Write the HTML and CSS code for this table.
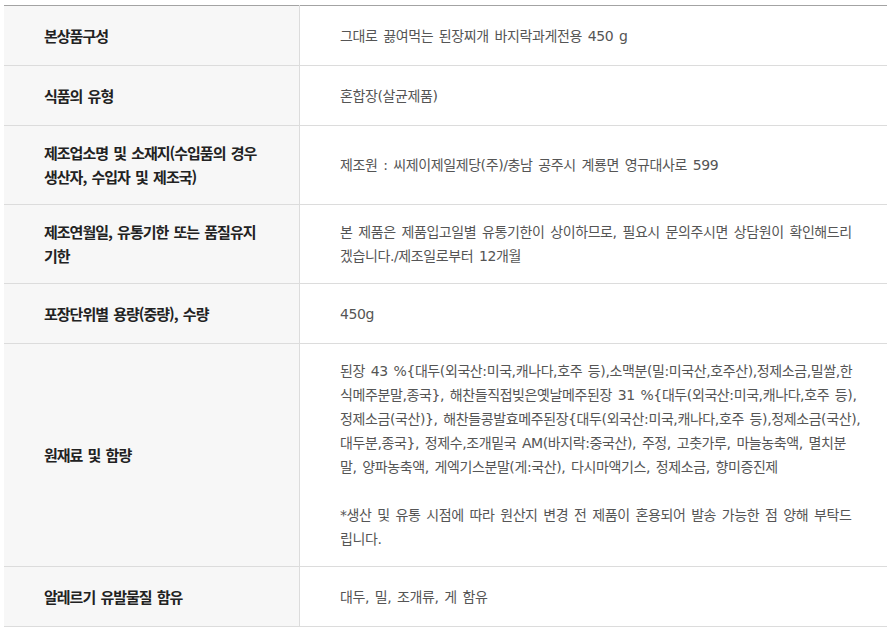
FILE: index.html
```html
<!DOCTYPE html>
<html lang="ko">
<head>
<meta charset="utf-8">
<link rel="stylesheet" href="styles.css">
</head>
<body>
<div class="wrap">
<table class="info">
  <tbody>
    <tr>
      <th>본상품구성</th>
      <td>그대로 끓여먹는 된장찌개 바지락과게전용 450 g</td>
    </tr>
    <tr>
      <th>식품의 유형</th>
      <td>혼합장(살균제품)</td>
    </tr>
    <tr>
      <th>제조업소명 및 소재지(수입품의 경우 생산자, 수입자 및 제조국)</th>
      <td>제조원 : 씨제이제일제당(주)/충남 공주시 계룡면 영규대사로 599</td>
    </tr>
    <tr>
      <th>제조연월일, 유통기한 또는 품질유지 기한</th>
      <td>본 제품은 제품입고일별 유통기한이 상이하므로, 필요시 문의주시면 상담원이 확인해드리겠습니다./제조일로부터 12개월</td>
    </tr>
    <tr>
      <th>포장단위별 용량(중량), 수량</th>
      <td>450g</td>
    </tr>
    <tr>
      <th>원재료 및 함량</th>
      <td>된장 43 %{대두(외국산:미국,캐나다,호주 등),소맥분(밀:미국산,호주산),정제소금,밀쌀,한식메주분말,종국}, 해찬들직접빚은옛날메주된장 31 %{대두(외국산:미국,캐나다,호주 등),정제소금(국산)}, 해찬들콩발효메주된장{대두(외국산:미국,캐나다,호주 등),정제소금(국산),대두분,종국}, 정제수,조개밑국 AM(바지락:중국산), 주정, 고춧가루, 마늘농축액, 멸치분말, 양파농축액, 게엑기스분말(게:국산), 다시마액기스, 정제소금, 향미증진제<br><br>*생산 및 유통 시점에 따라 원산지 변경 전 제품이 혼용되어 발송 가능한 점 양해 부탁드립니다.</td>
    </tr>
    <tr>
      <th>알레르기 유발물질 함유</th>
      <td>대두, 밀, 조개류, 게 함유</td>
    </tr>
  </tbody>
</table>
</div>
</body>
</html>
```

FILE: styles.css
```css
html, body {
  margin: 0;
  padding: 0;
  background: #fff;
}
.wrap {
  padding: 5px 0 0 4px;
}
.info {
  width: 883px;
  border-collapse: collapse;
  table-layout: fixed;
  border-top: 1px solid #a3a3a3;
  font-family: "Noto Sans CJK KR", "Noto Sans", sans-serif;
}
.info th,
.info td {
  height: 29px;
  padding: 15px 0;
  line-height: 24px;
  vertical-align: middle;
  text-align: left;
  border-bottom: 1px solid #dcdcdc;
}
.info th {
  width: 215px;
  padding-left: 40px;
  padding-right: 40px;
  background: #f7f7f7;
  border-right: 1px solid #dcdcdc;
  font-size: 15px;
  letter-spacing: -1px;
  word-spacing: 2px;
  font-weight: 700;
  color: #222;
}
.info td {
  padding-left: 40px;
  padding-right: 26px;
  font-family: "DejaVu Sans", "Noto Sans CJK KR", sans-serif;
  font-size: 14px;
  letter-spacing: -0.4px;
  word-spacing: 1.7px;
  font-weight: 400;
  color: #555;
}
```
